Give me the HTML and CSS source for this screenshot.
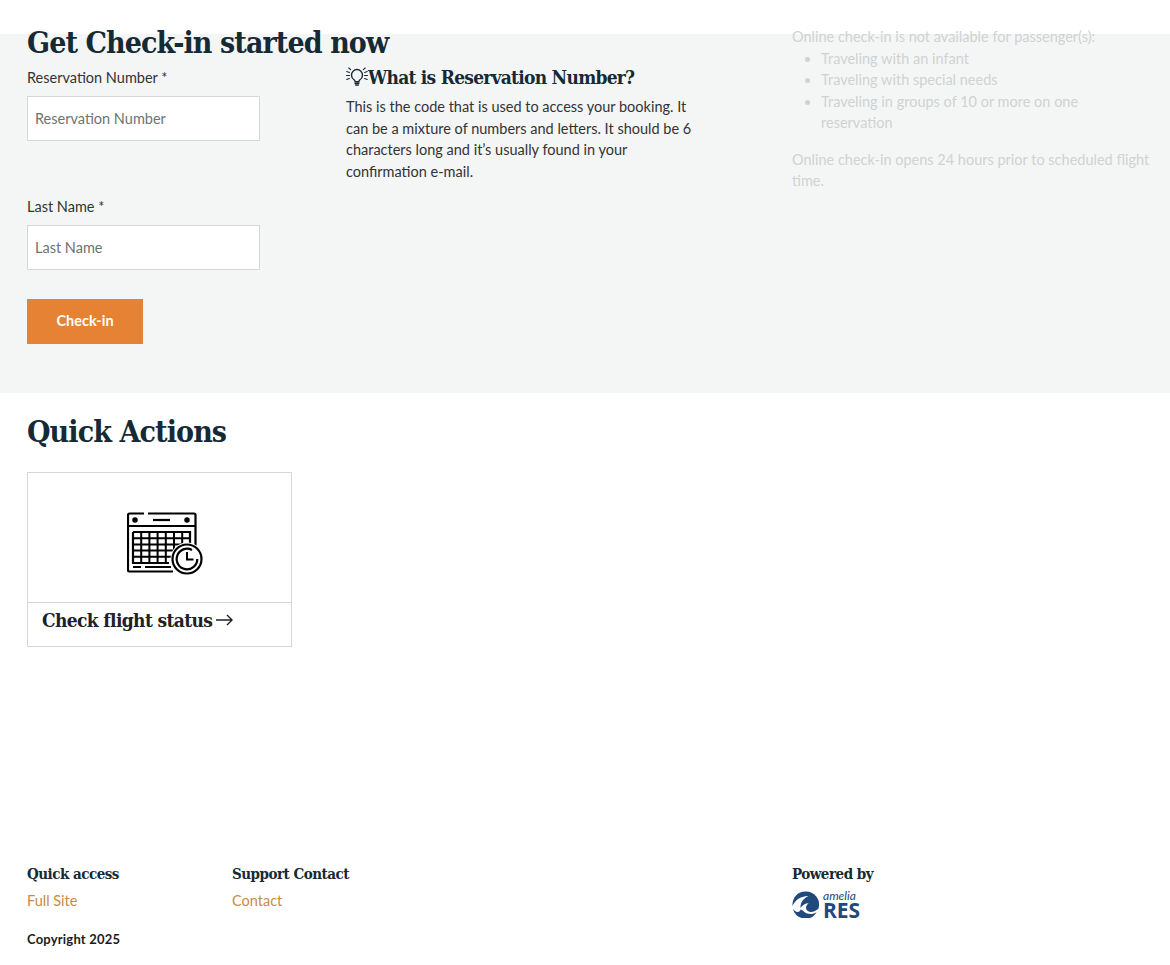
FILE: index.html
```html
<!DOCTYPE html>
<html lang="en">
<head>
<meta charset="utf-8">
<title>Check-in</title>
<link rel="stylesheet" href="styles.css">
</head>
<body>
<div class="topbar"></div>
<main>
  <section class="checkin">
    <h1 class="title">Get Check-in started now</h1>
    <div class="checkin-grid">
      <form class="form">
        <div class="field">
          <label class="label" for="res">Reservation Number *</label>
          <input class="input" id="res" type="text" placeholder="Reservation Number">
        </div>
        <div class="field">
          <label class="label" for="last">Last Name *</label>
          <input class="input" id="last" type="text" placeholder="Last Name">
        </div>
        <button class="btn" type="button">Check-in</button>
      </form>
      <div class="help">
        <h2 class="help-title">
          <svg class="bulb" viewBox="0 0 22 20" width="22" height="20" fill="none" stroke="#1a2b33" stroke-linecap="round">
            <path d="M8.300 13c-1.800-1.200-2.800-2.900-2.800-4.800C5.500 5 8 2.500 11 2.500s5.500 2.500 5.500 5.700c0 1.900-1 3.600-2.800 4.800-.6.500-.8 1.100-.8 1.700H9.100c0-.6-.2-1.200-.8-1.700z" stroke-width="1.400"/>
            <path d="M9.100 16.200h3.800M9.600 18h2.800" stroke-width="1.400"/>
            <path d="M.8 4.500l2.600 1M.5 8.500h3M.8 12.500l2.600-1M2.800 1l1.800 1.700M21.200 4.500l-2.600 1M21.500 8.500h-3M21.200 12.500l-2.600-1M19.200 1l-1.800 1.700" stroke-width="1.100"/>
          </svg>
          <span>What is Reservation Number?</span>
        </h2>
        <p class="help-text">This is the code that is used to access your booking. It can be a mixture of numbers and letters. It should be 6 characters long and it’s usually found in your confirmation e-mail.</p>
      </div>
      <div class="notice">
        <p class="notice-p">Online check-in is not available for passenger(s):</p>
        <ul class="notice-list">
          <li>Traveling with an infant</li>
          <li>Traveling with special needs</li>
          <li>Traveling in groups of 10 or more on one reservation</li>
        </ul>
        <p class="notice-p">Online check-in opens 24 hours prior to scheduled flight time.</p>
      </div>
    </div>
  </section>
  <section class="quick">
    <h2 class="quick-title">Quick Actions</h2>
    <a class="card" href="#">
      <div class="card-icon">
        <svg viewBox="0 0 76 64" width="76" height="64" fill="none" stroke="#000" stroke-width="2.200">
          <path d="M17 1.500H2.500a1.500 1.500 0 0 0-1.500 1.500V58a1.500 1.500 0 0 0 1.500 1.500H46M21 1.500h46a1.500 1.500 0 0 1 1.500 1.500V34"/>
          <path d="M1 14h67.500"/>
          <circle cx="8" cy="8" r="2" fill="#000" stroke-width="1.500"/><circle cx="60" cy="8" r="2" fill="#000" stroke-width="1.500"/>
          <path d="M26 8h17"/>
          <path d="M6 55h8M18 55h26"/>
          <path d="M6 20h57v14M6 20v31h36" />
          <path d="M6 26.200h57M6 32.400h57M6 38.600h44M6 44.800h40M14.200 20v31M22.400 20v31M30.600 20v31M38.800 20v31M47 20v20M55.200 20v14" stroke-width="2"/>
          <circle cx="60" cy="47" r="16.500" fill="#fff" stroke="none"/>
          <circle cx="60" cy="47" r="14.500" stroke-width="2.200"/>
          <path d="M70.300 47A10.300 10.300 0 1 1 65 38" stroke-width="2.200"/>
          <path d="M60 40v7.500h6.500" stroke-width="2"/>
        </svg>
      </div>
      <div class="card-foot"><span>Check flight status</span>
        <svg class="arrow" viewBox="0 0 17 12" width="17" height="12" fill="none" stroke="#1d2228" stroke-width="1.400">
          <path d="M0 6h16M11 1l5 5-5 5"/>
        </svg>
      </div>
    </a>
  </section>
</main>
<footer class="footer">
  <div class="foot-cols">
    <div class="foot-a">
      <h3 class="foot-title">Quick access</h3>
      <a class="foot-link" href="#">Full Site</a>
    </div>
    <div class="foot-b">
      <h3 class="foot-title">Support Contact</h3>
      <a class="foot-link" href="#">Contact</a>
    </div>
    <div class="foot-c">
      <h3 class="foot-title">Powered by</h3>
      <div class="logo">
        <svg class="logo-mark" viewBox="0 0 28 28" width="27" height="27">
          <path fill="#20497c" d="M14 .5A13.500 13.500 0 0 0 .6 15.500C3 10 8 5.500 17 5.200 12 7.500 8.500 12 8.800 17.500c2-3 5-4.800 8.500-4.800-2.800 1.800-3.800 5.300-1.500 7.600 3 2.800 8 1.500 11.500-1.800A13.500 13.500 0 0 0 14 .5z"/>
          <path fill="#20497c" d="M.9 18.500A13.500 13.500 0 0 0 25.500 22c-4 2.500-9.500 2.500-13-.5C10 19.500 9 18 8.500 20.500 6 23 3 21.500.9 18.500z"/>
        </svg>
        <div class="logo-text"><span class="logo-small">amelia</span><span class="logo-big">RES</span></div>
      </div>
    </div>
  </div>
  <p class="copy">Copyright 2025</p>
</footer>
</body>
</html>
```

FILE: styles.css
```css
* { box-sizing: border-box; }
html, body { margin: 0; padding: 0; }
body {
  width: 1170px;
  height: 965px;
  overflow: hidden;
  background: #fff;
  color: #1a2b33;
  font-family: Lato, "Open Sans", sans-serif;
  font-size: 14.5px;
  display: flex;
  flex-direction: column;
}
.topbar { height: 34px; flex: none; background: #fff; }
.checkin { display: flow-root; height: 359px; background: #f4f6f6; padding: 0 20px 0 27px; }
.title {
  margin: -13px 0 0;
  font-family: "DejaVu Serif Condensed", "DejaVu Serif", serif;
  font-weight: 700;
  font-size: 30px;
  line-height: 43px;
  letter-spacing: -0.9px;
  color: #162a35;
}
.checkin-grid {
  display: grid;
  grid-template-columns: 319px 446px 358px;
}
.form { width: 233px; }
.field { margin-bottom: 29px; }
.field:first-child { margin-bottom: 56px; }
.label { display: block; height: 19px; line-height: 19px; margin-top: 4px; margin-bottom: 9px; color: #333; }
.input {
  display: block;
  width: 233px;
  height: 45px;
  padding: 0 7px;
  border: 1px solid #d6d8d8;
  background: #fff;
  border-radius: 0;
  font: inherit;
}
.input::placeholder { color: #6f7273; opacity: 1; }
.btn {
  display: block;
  width: 116px;
  height: 45px;
  background: #e58233;
  color: #fff;
  border: 0;
  font: inherit;
  font-weight: 700;
  padding: 0 0 2px;
}
.help { width: 350px; }
.help-title {
  display: flex;
  align-items: center;
  margin: 0 0 7px;
  height: 25px;
  font-family: "DejaVu Serif Condensed", "DejaVu Serif", serif;
  font-size: 19px;
  font-weight: 700;
  letter-spacing: -0.74px;
  color: #162a35;
}
.bulb { flex: none; margin-top: 1px; }
.help-text { margin: 0; line-height: 21.500px; color: #333; }
.notice { color: #cfd2d2; line-height: 21.500px; margin-top: -38px; }
.notice-p { margin: 0 0 15px; }
.notice-list { margin: 0 0 15px; padding-left: 29px; }
.notice-list + .notice-p { margin: 0; }
.notice-p:first-child { margin-bottom: 0; }
.quick { padding: 18px 0 0 27px; }
.quick-title {
  margin: 0 0 19px;
  font-family: "DejaVu Serif Condensed", "DejaVu Serif", serif;
  font-size: 30px;
  line-height: 42px;
  font-weight: 700;
  letter-spacing: -0.9px;
  color: #162a35;
}
.card {
  display: block;
  width: 265px;
  height: 175px;
  border: 1px solid #d6d8d8;
  text-decoration: none;
  color: #1d2228;
}
.card-icon { height: 130px; border-bottom: 1px solid #d6d8d8; display: flex; justify-content: center; align-items: center; padding-left: 10px; padding-top: 13px; }
.card-foot {
  display: flex;
  align-items: center;
  gap: 4px;
  padding: 4px 0 0 14px;
  font-family: "DejaVu Serif Condensed", "DejaVu Serif", serif;
  font-size: 19px;
  line-height: 26px;
  font-weight: 700;
  letter-spacing: -0.63px;
}
.arrow { flex: none; }
.footer { margin-top: auto; padding: 0 0 17px 27px; }
.foot-cols { display: flex; }
.foot-a { width: 205px; }
.foot-b { width: 560px; }
.foot-title {
  margin: 0 0 7px;
  font-family: "DejaVu Serif Condensed", "DejaVu Serif", serif;
  font-size: 15px;
  line-height: 20px;
  font-weight: 700;
  letter-spacing: -0.5px;
  color: #162a35;
}
.foot-link { color: #c98a4b; text-decoration: none; line-height: 20px; display: block; }
.logo { display: flex; align-items: center; gap: 4px; margin-top: -1px; }
.logo-text { display: flex; flex-direction: column; color: #20497c; }
.logo-small { font-style: italic; font-size: 12px; line-height: 12px; }
.logo-big { font-size: 21px; font-weight: 700; line-height: 16px; font-family: "Open Sans", sans-serif; }
.copy { margin: 12px 0 0; font-size: 13px; font-weight: 700; line-height: 18px; letter-spacing: 0.2px; color: #1c1c1c; }
```
